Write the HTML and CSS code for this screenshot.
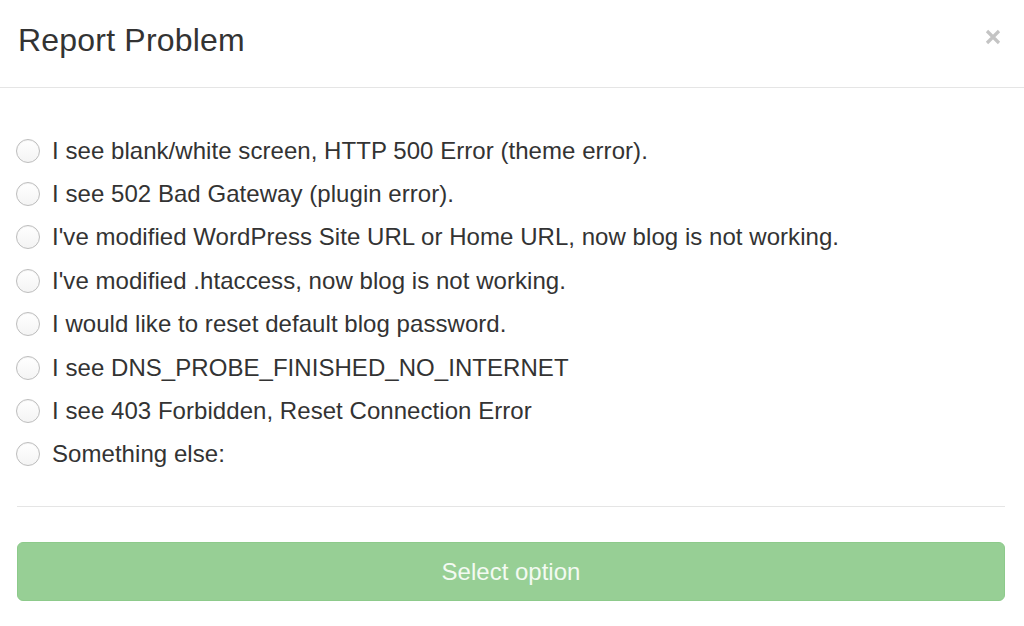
FILE: index.html
```html
<!DOCTYPE html>
<html>
<head>
<meta charset="utf-8">
<link rel="stylesheet" href="styles.css">
</head>
<body>
<div class="modal">
  <div class="modal-header">
    <h1 class="title">Report Problem</h1>
    <button class="close" aria-label="Close">
      <svg width="16" height="16" viewBox="0 0 16 16"><path d="M2 2 L14 14 M14 2 L2 14" stroke="#c4c4c4" stroke-width="3.2" stroke-linecap="butt"/></svg>
    </button>
  </div>
  <div class="options">
    <label class="option"><span class="radio"></span><span>I see blank/white screen, HTTP 500 Error (theme error).</span></label>
    <label class="option"><span class="radio"></span><span>I see 502 Bad Gateway (plugin error).</span></label>
    <label class="option"><span class="radio"></span><span>I've modified WordPress Site URL or Home URL, now blog is not working.</span></label>
    <label class="option"><span class="radio"></span><span>I've modified .htaccess, now blog is not working.</span></label>
    <label class="option"><span class="radio"></span><span>I would like to reset default blog password.</span></label>
    <label class="option"><span class="radio"></span><span>I see DNS_PROBE_FINISHED_NO_INTERNET</span></label>
    <label class="option"><span class="radio"></span><span>I see 403 Forbidden, Reset Connection Error</span></label>
    <label class="option"><span class="radio"></span><span>Something else:</span></label>
  </div>
  <div class="divider"></div>
  <button class="submit">Select option</button>
</div>
</body>
</html>
```
FILE: styles.css
```css
html, body {
  margin: 0;
  padding: 0;
  background: #ffffff;
}
body {
  font-family: "Liberation Sans", Arial, Helvetica, sans-serif;
  color: #333333;
}
.modal {
  width: 1024px;
  height: 626px;
  overflow: hidden;
}
.modal-header {
  height: 81px;
  padding: 0 23px 6px 18px;
  border-bottom: 1px solid #e5e5e5;
  display: flex;
  align-items: center;
  justify-content: space-between;
}
.title {
  margin: 0;
  font-size: 32px;
  font-weight: normal;
  line-height: 1.1;
  color: #333333;
  letter-spacing: 0.2px;
}
.close {
  border: 0;
  background: none;
  padding: 0;
  width: 16px;
  height: 16px;
  margin-top: -7px;
  display: flex;
}
.options {
  padding-top: 41px;
  display: flex;
  flex-direction: column;
}
.option {
  height: 43.4px;
  display: flex;
  align-items: center;
  gap: 12px;
  padding-left: 16px;
  font-size: 24px;
  letter-spacing: 0.05px;
  color: #333333;
}
.radio {
  width: 22px;
  height: 22px;
  border-radius: 50%;
  border: 1px solid #bdbdbd;
  background: linear-gradient(#ffffff, #f4f4f4);
  box-shadow: inset 0 1px 1px rgba(0,0,0,0.05);
  flex: none;
}
.divider {
  margin: 30px 19px 0 17px;
  border-top: 1px solid #e5e5e5;
}
.submit {
  display: block;
  margin: 35px 0 0 17px;
  width: 988px;
  height: 59px;
  border: 1px solid #8dca8b;
  border-radius: 6px;
  background: #97cf95;
  color: #f3faf2;
  font-family: "Liberation Sans", Arial, Helvetica, sans-serif;
  font-size: 24px;
  padding: 0;
}
```
